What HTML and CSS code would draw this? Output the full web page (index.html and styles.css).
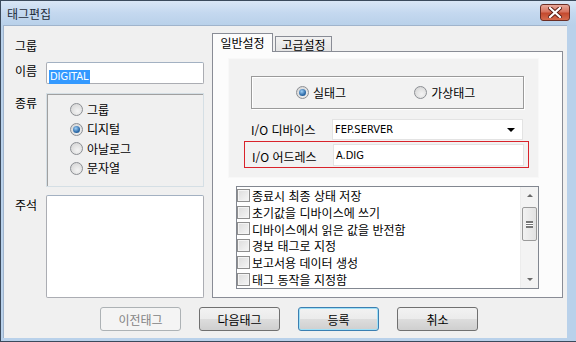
FILE: index.html
```html
<!DOCTYPE html>
<html lang="ko">
<head>
    <meta charset="UTF-8">
    <title>태그편집</title>
    <link rel="stylesheet" href="styles.css">
</head>
<body>
    <div class="window">
        <div class="titlebar">
            <span class="title">태그편집</span>
            <button class="close">
                <svg width="14" height="11" viewBox="0 0 14 11">
                    <path d="M2 1 L12 10 M12 1 L2 10" stroke="#5a1a12" stroke-width="4" stroke-linecap="square"/>
                    <path d="M2 1 L12 10 M12 1 L2 10" stroke="#ffffff" stroke-width="2.2" stroke-linecap="square"/>
                </svg>
            </button>
        </div>
        <div class="client">
            <div class="main">
                <div class="left">
                    <div class="row row-group"><span class="label">그룹</span></div>
                    <div class="row row-name">
                        <span class="label">이름</span>
                        <div class="textbox"><span class="selected">DIGITAL</span></div>
                    </div>
                    <div class="row row-kind">
                        <span class="label">종류</span>
                        <div class="groupbox">
                            <div class="radio-line"><span class="radio"></span>그룹</div>
                            <div class="radio-line"><span class="radio checked"></span>디지털</div>
                            <div class="radio-line"><span class="radio"></span>아날로그</div>
                            <div class="radio-line"><span class="radio"></span>문자열</div>
                        </div>
                    </div>
                    <div class="row row-note">
                        <span class="label">주석</span>
                        <div class="textarea"></div>
                    </div>
                </div>
                <div class="right">
                    <div class="tabs">
                        <div class="tab active">일반설정</div>
                        <div class="tab">고급설정</div>
                    </div>
                    <div class="panel">
                        <div class="inner">
                            <div class="frame">
                                <div class="radio-line"><span class="radio checked"></span>실태그</div>
                                <div class="radio-line"><span class="radio"></span>가상태그</div>
                            </div>
                            <div class="field device">
                                <span class="field-label">I/O 디바이스</span>
                                <div class="combo">
                                    <span class="latin">FEP.SERVER</span>
                                    <span class="arrow"></span>
                                </div>
                            </div>
                            <div class="field highlight">
                                <span class="field-label">I/O 어드레스</span>
                                <div class="input"><span class="latin">A.DIG</span></div>
                            </div>
                        </div>
                        <div class="listbox">
                            <div class="items">
                                <div class="item"><span class="check"></span>종료시 최종 상태 저장</div>
                                <div class="item"><span class="check"></span>초기값을 디바이스에 쓰기</div>
                                <div class="item"><span class="check"></span>디바이스에서 읽은 값을 반전함</div>
                                <div class="item"><span class="check"></span>경보 태그로 지정</div>
                                <div class="item"><span class="check"></span>보고서용 데이터 생성</div>
                                <div class="item"><span class="check"></span>태그 동작을 지정함</div>
                            </div>
                            <div class="scrollbar">
                                <div class="sb-btn"><span class="up"></span></div>
                                <div class="sb-track">
                                    <div class="thumb"><span class="grip"></span></div>
                                </div>
                                <div class="sb-btn"><span class="down"></span></div>
                            </div>
                        </div>
                    </div>
                </div>
            </div>
            <div class="buttons">
                <button class="btn" disabled>이전태그</button>
                <button class="btn">다음태그</button>
                <button class="btn default">등록</button>
                <button class="btn">취소</button>
            </div>
        </div>
    </div>
</body>
</html>
```
FILE: styles.css
```css
body
{
    margin: 0;
    font-family: "Noto Sans CJK KR", "DejaVu Sans", sans-serif;
    font-size: 12px;
    color: #000;
    background: #ffffff;
}
.window
{
    width: 576px;
    height: 342px;
    box-sizing: border-box;
    background: #b9d1ea;
    border-left: 1px solid #3b4a5c;
    border-bottom: 1px solid #3b4a5c;
    border-top: 1px solid #3b4a5c;
    padding: 0 9px 3px 2px;
    display: flex;
    flex-direction: column;
}
.titlebar
{
    height: 24px;
    margin: 0 -9px 0 -2px;
    padding: 0 6px 0 6px;
    background: linear-gradient(#d9e6f5, #c4d8ef 50%, #b9d1ea);
    display: flex;
    align-items: center;
    justify-content: space-between;
}
.title
{
    font-size: 12px;
    color: #1e2b3a;
    line-height: 1;
    padding-top: 1px;
}
.close
{
    width: 30px;
    height: 17px;
    margin-top: -2px;
    padding: 0;
    border: 1px solid #6b2e25;
    border-radius: 3px;
    background: linear-gradient(#e9a99b, #d7735f 45%, #c44a2f 55%, #d56b4e);
    display: flex;
    align-items: center;
    justify-content: center;
}
.client
{
    flex: 1;
    background: #f0f0f0;
    border-top: 1px solid #a0b4cc;
    border-left: 1px solid #a0b4cc;
    display: flex;
    flex-direction: column;
}
.main
{
    display: flex;
    gap: 8px;
    padding-left: 11px;
}
.left
{
    width: 189px;
    padding-top: 12px;
}
.row
{
    display: flex;
}
.label
{
    width: 31px;
    line-height: 16px;
    flex-shrink: 0;
}
.row-name
{
    margin-top: 8px;
}
.row-name .label
{
    padding-top: 1px;
}
.row-kind .label,
.row-note .label
{
    padding-top: 2px;
}
.row-kind
{
    margin-top: 9px;
}
.row-note
{
    margin-top: 8px;
}
.textbox
{
    width: 158px;
    height: 22px;
    box-sizing: border-box;
    background: #fff;
    border: 1px solid #abadb3;
    border-top-color: #a3b1c2;
    border-radius: 2px;
    padding: 3px 2px;
}
.selected
{
    font-family: "DejaVu Sans Condensed", "DejaVu Sans", sans-serif;
    font-size: 11px;
    line-height: 14px;
    background: #3399ff;
    color: #fff;
    display: inline-block;
    padding: 0 1px;
}
.groupbox
{
    width: 158px;
    height: 94px;
    box-sizing: border-box;
    border: 1px solid #d5dfe5;
    box-shadow: inset 1px 1px 0 #a0a0a0;
    padding: 6px 0 0 23px;
}
.groupbox .radio-line
{
    height: 19.5px;
}
.radio-line
{
    display: flex;
    align-items: center;
    gap: 4px;
    line-height: 16px;
}
.radio
{
    width: 11px;
    height: 11px;
    border: 1px solid #8c8f94;
    border-radius: 50%;
    background: radial-gradient(circle at 60% 65%, #f4f4f4, #d0d0d0);
    box-sizing: content-box;
    position: relative;
    flex-shrink: 0;
}
.radio.checked::after
{
    content: "";
    position: absolute;
    left: 2px;
    top: 2px;
    width: 7px;
    height: 7px;
    border-radius: 50%;
    background: radial-gradient(circle at 40% 35%, #9fd0f7, #2c6aa8 60%, #1a4b80);
}
.textarea
{
    width: 158px;
    height: 103px;
    box-sizing: border-box;
    background: #fff;
    border: 1px solid #abadb3;
    border-top-color: #a3b1c2;
    border-radius: 2px;
}
.right
{
    width: 351px;
    padding-top: 7px;
}
.tabs
{
    display: flex;
    height: 18px;
    align-items: flex-end;
    position: relative;
    z-index: 1;
}
.tab
{
    width: 57px;
    box-sizing: border-box;
    text-align: center;
    border: 1px solid #898c95;
    border-bottom: none;
    line-height: 15px;
    height: 15px;
    background: linear-gradient(#f2f2f2, #e4e4e4);
}
.tab.active
{
    width: 61px;
    line-height: 17px;
    background: #fcfcfc;
    margin-bottom: -1px;
    height: 19px;
}
.tab + .tab
{
    margin-left: 2px;
}
.panel
{
    height: 247px;
    box-sizing: border-box;
    border: 1px solid #898c95;
    background: #fcfcfc;
    padding: 6px 0 0 15px;
}
.inner
{
    width: 311px;
    height: 120px;
    box-sizing: border-box;
    background: #f2f2f2;
    border: 1px solid #f8f8f8;
    padding: 17px 0 0 22px;
}
.frame
{
    width: 273px;
    height: 33px;
    box-sizing: border-box;
    border: 1px solid #9a9a9a;
    box-shadow: 1px 1px 0 #ffffff, inset 1px 1px 0 #ffffff;
    display: flex;
    align-items: center;
    padding-left: 44px;
    gap: 68px;
}
.field
{
    display: flex;
    align-items: center;
    width: 272px;
}
.field-label
{
    width: 81px;
    flex-shrink: 0;
}
.field.device
{
    margin-top: 10px;
}
.combo,
.input
{
    width: 191px;
    height: 21px;
    box-sizing: border-box;
    background: #fff;
    border: 1px solid #e3e3e3;
    display: flex;
    align-items: center;
    padding-left: 2px;
}
.combo
{
    justify-content: space-between;
    padding-right: 7px;
}
.latin
{
    font-family: "DejaVu Sans Condensed", "DejaVu Sans", sans-serif;
    font-size: 11px;
}
.arrow
{
    width: 0;
    height: 0;
    border-left: 4px solid transparent;
    border-right: 4px solid transparent;
    border-top: 4px solid #000;
}
.field.highlight
{
    margin: 1px 0 0 -7px;
    padding: 2px 4px 0 7px;
    width: 285px;
    height: 27px;
    box-sizing: border-box;
    border: 1px solid #d9232b;
    align-items: flex-start;
}
.field.highlight .field-label
{
    padding-top: 4px;
}
.field.highlight .input
{
    height: 22px;
}
.listbox
{
    width: 303px;
    height: 103px;
    margin: 8px 0 0 8px;
    box-sizing: border-box;
    border: 1px solid #828790;
    background: #fff;
    display: flex;
    overflow: hidden;
}
.items
{
    flex: 1;
}
.item
{
    height: 16.8px;
    display: flex;
    align-items: center;
    gap: 2px;
    white-space: nowrap;
}
.check
{
    width: 11px;
    height: 11px;
    border: 1px solid #8f8f8f;
    background: linear-gradient(135deg, #dcdcdc, #f6f6f6);
    box-shadow: inset 0 0 0 1px #f4f4f4;
    flex-shrink: 0;
}
.scrollbar
{
    width: 17px;
    display: flex;
    flex-direction: column;
    background: #f3f3f3;
    border-left: 1px solid #ececec;
}
.sb-btn
{
    height: 17px;
    display: flex;
    align-items: center;
    justify-content: center;
}
.up,
.down
{
    width: 0;
    height: 0;
    border-left: 3px solid transparent;
    border-right: 3px solid transparent;
}
.up
{
    border-bottom: 3px solid #6a6a6a;
}
.down
{
    border-top: 3px solid #6a6a6a;
}
.sb-track
{
    flex: 1;
}
.thumb
{
    margin: 3px 1px 0 1px;
    height: 34px;
    box-sizing: border-box;
    border: 1px solid #9a9a9a;
    border-radius: 2px;
    background: linear-gradient(90deg, #f2f2f2, #e2e2e2);
    display: flex;
    align-items: center;
    justify-content: center;
}
.grip
{
    width: 7px;
    height: 5px;
    border-top: 1px solid #777;
    border-bottom: 1px solid #777;
    background: linear-gradient(#fff 0 1px, #777 1px 2px, transparent 2px);
    background-size: 100% 2px;
    background-position: 0 1px;
}
.buttons
{
    display: flex;
    gap: 18px;
    padding: 9px 0 0 96px;
}
.btn
{
    width: 81px;
    height: 24px;
    font-family: "Noto Sans CJK KR", "DejaVu Sans", sans-serif;
    font-size: 12px;
    border: 1px solid #707070;
    border-radius: 3px;
    background: linear-gradient(#f2f2f2, #ebebeb 50%, #dddddd 50%, #cfcfcf);
    color: #000;
    padding: 0;
}
.btn:disabled
{
    border-color: #adb2b5;
    background: #f4f4f4;
    color: #838383;
}
.btn.default
{
    border-color: #3c7fb1;
    box-shadow: inset 0 0 0 1px #9ee0f7;
}
```
